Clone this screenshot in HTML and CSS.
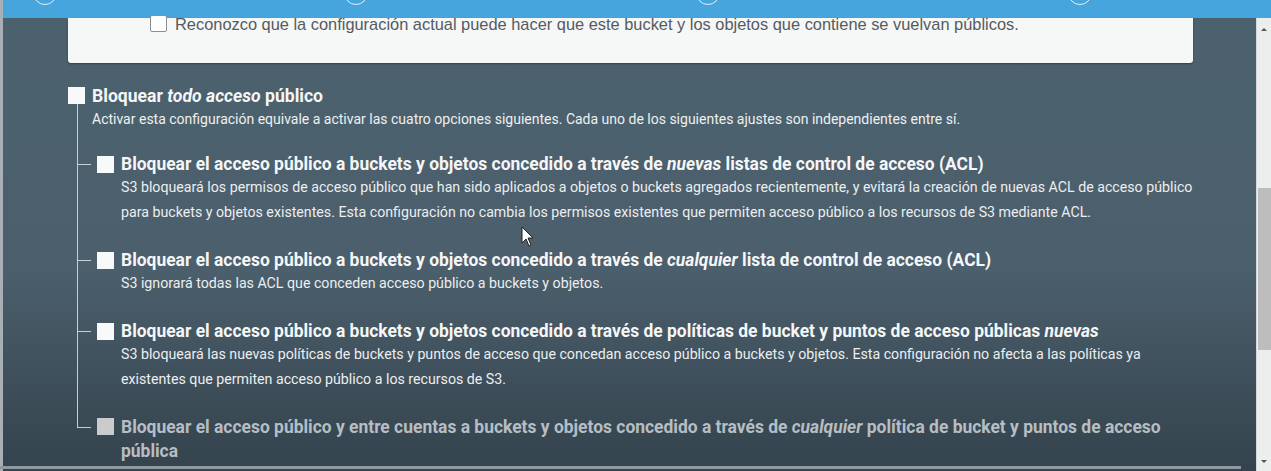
FILE: index.html
```html
<!DOCTYPE html>
<html lang="es">
<head>
<meta charset="utf-8">
<title>Bloquear acceso público</title>
<link rel="stylesheet" href="styles.css">
</head>
<body>
<div class="window">
  <div class="edge"></div>
  <div class="main">
    <div class="stepbar">
      <span class="step s1"></span>
      <span class="step s2"></span>
      <span class="step s3"></span>
      <span class="step s4"></span>
    </div>
    <div class="body">
      <div class="content">
        <div class="card">
          <label class="ack"><span class="box light"></span>Reconozco que la configuración actual puede hacer que este bucket y los objetos que contiene se vuelvan públicos.</label>
        </div>

        <div class="master">
          <span class="box"></span>
          <span class="title">Bloquear <em>todo acceso</em> público</span>
        </div>
        <div class="tree">
          <p class="lead">Activar esta configuración equivale a activar las cuatro opciones siguientes. Cada uno de los siguientes ajustes son independientes entre sí.</p>

          <div class="item">
            <div class="row"><span class="box"></span><span class="title">Bloquear el acceso público a buckets y objetos concedido a través de <em>nuevas</em> listas de control de acceso (ACL)</span></div>
            <p class="desc">S3 bloqueará los permisos de acceso público que han sido aplicados a objetos o buckets agregados recientemente, y evitará la creación de nuevas ACL de acceso público para buckets y objetos existentes. Esta configuración no cambia los permisos existentes que permiten acceso público a los recursos de S3 mediante ACL.</p>
          </div>

          <div class="item">
            <div class="row"><span class="box"></span><span class="title">Bloquear el acceso público a buckets y objetos concedido a través de <em>cualquier</em> lista de control de acceso (ACL)</span></div>
            <p class="desc">S3 ignorará todas las ACL que conceden acceso público a buckets y objetos.</p>
          </div>

          <div class="item">
            <div class="row"><span class="box"></span><span class="title">Bloquear el acceso público a buckets y objetos concedido a través de políticas de bucket y puntos de acceso públicas <em>nuevas</em></span></div>
            <p class="desc">S3 bloqueará las nuevas políticas de buckets y puntos de acceso que concedan acceso público a buckets y objetos. Esta configuración no afecta a las políticas ya existentes que permiten acceso público a los recursos de S3.</p>
          </div>

          <div class="item last disabled">
            <div class="row"><span class="box"></span><span class="title"><span class="ln">Bloquear el acceso público y entre cuentas a buckets y objetos concedido a través de <em>cualquier</em> política de bucket y puntos de acceso</span><span class="ln">pública</span></span></div>
          </div>
        </div>
        <div class="bottomline"></div>
      </div>
      <div class="scrollbar">
        <span class="arrow up"></span>
        <span class="thumb"></span>
        <span class="arrow down"></span>
      </div>
    </div>
  </div>
</div>
<svg class="cursor" width="14" height="21" viewBox="0 0 14 21"><path d="M1 1 L1 17 L5 13 L8 20 L10 19 L7 12 L12 12 Z" fill="#fff" stroke="#222" stroke-width="1"/></svg>
</body>
</html>
```
FILE: styles.css
```css
html, body {
  margin: 0;
  height: 100%;
  overflow: hidden;
}
body {
  font-family: Roboto, "Liberation Sans", Arial, sans-serif;
  background: #4b5f6c;
  position: relative;
}
.window {
  display: flex;
  height: 471px;
}
.edge {
  width: 3px;
  background: #a9b0b5;
}
.main {
  flex: 1;
  display: flex;
  flex-direction: column;
  min-width: 0;
}
.stepbar {
  height: 18px;
  background: #45a5dc;
  position: relative;
  overflow: hidden;
  flex: none;
}
.step {
  position: absolute;
  top: -19px;
  width: 22px;
  height: 22px;
  border: 1.5px solid #e4f1fa;
  border-radius: 50%;
}
.s1 { left: 30px; }
.s2 { left: 341px; }
.s3 { left: 693px; }
.s4 { left: 1065px; }

.body {
  flex: 1;
  display: flex;
  background: linear-gradient(#4c616e 0%, #4b5f6c 55%, #34434d 100%);
  min-height: 0;
}
.content {
  flex: 1;
  padding-left: 65px;
  position: relative;
}
.card {
  width: 1125px;
  height: 45px;
  box-sizing: border-box;
  background: #f6f7f7;
  border-radius: 0 0 3px 3px;
  box-shadow: 0 1px 2px rgba(0,0,0,0.35);
  padding-left: 82px;
}
.ack {
  display: flex;
  align-items: center;
  gap: 8px;
  font-family: "Liberation Sans", Arial, sans-serif;
  font-size: 16.4px;
  color: #555b60;
  line-height: 16px;
  position: relative;
  top: -3px;
}
.box {
  width: 17px;
  height: 17px;
  background: #f8f9fa;
  flex: none;
  box-sizing: border-box;
}
.box.light {
  background: #fff;
  border: 1px solid #8a8f93;
  border-radius: 2px;
}
.master {
  display: flex;
  align-items: center;
  gap: 7px;
  margin-top: 24px;
  height: 17px;
}
.master .title {
  font-size: 17.6px;
}
.title {
  font-weight: 700;
  font-size: 17.45px;
  color: #f5f6f7;
  white-space: nowrap;
}
.title em { font-style: italic; }
.tree {
  margin-left: 9px;
  width: 1160px;
}
.lead {
  margin: 0;
  padding: 5px 0 24px 14px;
  border-left: 1px solid #c9ced2;
  font-size: 14px;
  line-height: 20px;
  color: #eef0f1;
}
.item {
  position: relative;
  padding: 0 0 24px 19px;
  border-left: 1px solid #c9ced2;
}
.item::before {
  content: "";
  position: absolute;
  left: 0;
  top: 11px;
  width: 13px;
  border-top: 1px solid #c9ced2;
}
.item.last {
  border-left: none;
  padding-left: 20px;
}
.item.last::before {
  top: -1px;
  height: 12px;
  border-top: none;
  border-left: 1px solid #c9ced2;
  border-bottom: 1px solid #c9ced2;
}
.row {
  display: flex;
  align-items: center;
  gap: 7px;
  height: 22px;
}
.desc {
  margin: 0;
  padding-left: 24px;
  font-size: 14.2px;
  line-height: 25px;
  color: #eceef0;
  max-width: 1078px;
}
.disabled .row {
  align-items: flex-start;
  height: auto;
}
.disabled .box {
  background: #c9cbcc;
  margin-top: 2px;
}
.disabled .title {
  color: #b7bec3;
  line-height: 24px;
  margin-top: -1px;
  display: flex;
  flex-direction: column;
}
.ln {
  display: block;
}
.bottomline {
  position: absolute;
  left: -18px;
  right: 15px;
  bottom: 2px;
  height: 3px;
  background: #8e989e;
}
.scrollbar {
  width: 14px;
  flex: none;
  background: #eceded;
  display: flex;
  flex-direction: column;
  align-items: center;
  border-left: 1px solid #d6d8d9;
}
.thumb {
  width: 13px;
  height: 162px;
  background: #bdbdbd;
  margin-top: 157px;
}
.arrow {
  width: 0;
  height: 0;
  border-left: 3px solid transparent;
  border-right: 3px solid transparent;
}
.arrow.up {
  border-bottom: 3px solid #555;
  margin-top: 10px;
}
.arrow.down {
  border-top: 3px solid #555;
  margin-top: auto;
  margin-bottom: 8px;
}
.cursor {
  position: absolute;
  left: 521px;
  top: 226px;
}
```
